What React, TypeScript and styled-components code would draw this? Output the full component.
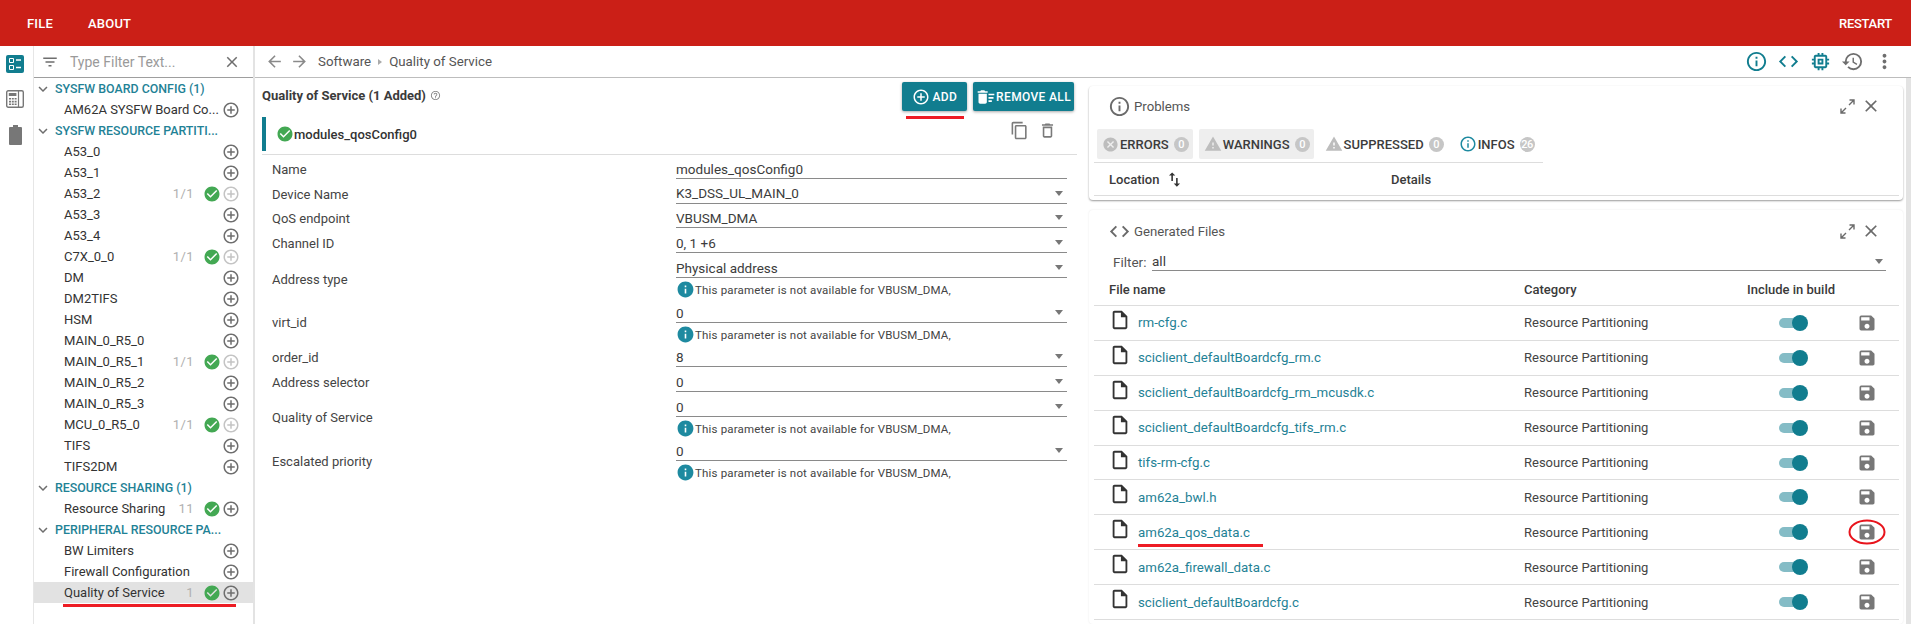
import React from "react";
import styled, { createGlobalStyle } from "styled-components";
import {
  MdAddCircleOutline,
  MdArrowBack,
  MdArrowForward,
  MdCancel,
  MdCheckCircle,
  MdClose,
  MdCode,
  MdContentCopy,
  MdDeleteSweep,
  MdExpandMore,
  MdFilterList,
  MdHistory,
  MdInfo,
  MdInfoOutline,
  MdMemory,
  MdMoreVert,
  MdOutlineDelete,
  MdOutlineInsertDriveFile,
  MdHelpOutline,
  MdSave,
  MdSwapVert,
  MdWarning,
} from "react-icons/md";

const TEAL = "#117d8f";
const GREY = "#6e6e6e";

const GlobalStyle = createGlobalStyle`
  html, body { margin: 0; padding: 0; background: #fff; }
  body { font-family: Roboto, "Liberation Sans", sans-serif; font-size: 13px; color: #333; overflow: hidden; }
  * { box-sizing: border-box; }
`;

const Page = styled.div`
  display: flex;
  flex-direction: column;
  height: 624px;
  overflow: hidden;
`;

const TopBar = styled.header`
  flex: 0 0 46px;
  display: flex;
  align-items: center;
  background: #cb1f17;
  color: #fff;
  font-size: 13px;
  font-weight: 500;
  letter-spacing: 0.2px;
  padding: 0 19px 0 27px;
  gap: 35px;
`;

const TopSpacer = styled.div`
  flex: 1;
`;

const RestartLabel = styled.span`
  letter-spacing: -0.3px;
`;

const Rail = styled.nav`
  flex: 0 0 34px;
  display: flex;
  flex-direction: column;
  align-items: center;
  padding: 9px 3px 0 0;
  border-right: 1px solid #e6e6e6;
  gap: 17px;
`;

const Body = styled.div`
  flex: 1;
  display: flex;
  min-height: 0;
`;

const Sidebar = styled.aside`
  flex: 0 0 221px;
  border-right: 2px solid #e3e3e3;
  display: flex;
  flex-direction: column;
`;

const FilterBar = styled.div`
  flex: 0 0 32px;
  display: flex;
  align-items: center;
  border-bottom: 1px solid #9e9e9e;
  padding: 0 12px 0 7px;
  color: #9a9a9a;
  font-size: 14px;
  svg { color: ${GREY}; }
`;

const FilterText = styled.span`
  flex: 1;
  padding-left: 11px;
`;

const TreeHeader = styled.div`
  height: 21px;
  display: flex;
  align-items: center;
  gap: 3px;
  color: #1f8296;
  font-size: 12.4px;
  font-weight: 500;
  white-space: nowrap;
  svg { color: ${GREY}; flex: none; }
`;

const TreeRow = styled.div<{ $active?: boolean }>`
  position: relative;
  height: 21px;
  display: flex;
  align-items: center;
  padding-left: 30px;
  padding-right: 13px;
  font-size: 13px;
  color: #333;
  background: ${(p) => (p.$active ? "#e2e2e2" : "transparent")};
`;

const TreeLabel = styled.span`
  flex: 1;
  white-space: nowrap;
`;

const TreeCount = styled.span`
  color: #b0b0b0;
  margin-right: 9px;
  letter-spacing: 0.4px;
`;

const Plus = styled(MdAddCircleOutline)<{ $off?: boolean }>`
  color: ${(p) => (p.$off ? "#c4c4c4" : GREY)};
  margin-left: 1px;
  margin-top: 1px;
`;

const RedLine = styled.span<{ $left: number; $width: number; $bottom: number }>`
  position: absolute;
  left: ${(p) => p.$left}px;
  width: ${(p) => p.$width}px;
  bottom: ${(p) => p.$bottom}px;
  height: 3px;
  background: #ed1c24;
`;

const Main = styled.main`
  flex: 1;
  min-width: 0;
  display: flex;
  flex-direction: column;
`;

const ToolBar = styled.div`
  flex: 0 0 32px;
  display: flex;
  align-items: center;
  border-bottom: 1px solid #bdbdbd;
  padding: 0 15px 0 10px;
  color: #555;
  font-size: 13.3px;
`;

const Crumbs = styled.div`
  flex: 1;
  display: flex;
  align-items: center;
  gap: 7px;
  padding-left: 9px;
`;

const CrumbArrow = styled.span`
  width: 0;
  height: 0;
  border-left: 4px solid #aaa;
  border-top: 3.5px solid transparent;
  border-bottom: 3.5px solid transparent;
`;

const ToolIcons = styled.div`
  display: flex;
  align-items: center;
  gap: 9px;
`;

const NavIcon = styled.span<{ $teal?: boolean }>`
  display: flex;
  color: ${(p) => (p.$teal ? TEAL : GREY)};
`;

const NavArrows = styled.div`
  display: flex;
  gap: 6px;
  color: #8a8a8a;
`;

const Content = styled.div`
  flex: 1;
  min-height: 0;
  display: flex;
`;

const LeftPanel = styled.section`
  flex: 0 0 829px;
  padding: 4px 7px 0 7px;
`;

const PanelHead = styled.div`
  height: 30px;
  display: flex;
  align-items: flex-start;
  justify-content: space-between;
  padding-right: 3px;
`;

const PanelTitle = styled.div`
  display: flex;
  align-items: center;
  gap: 4px;
  height: 26px;
  font-size: 13px;
  font-weight: 700;
  color: #3b3b3b;
  svg { color: #888; }
`;

const HeadButtons = styled.div`
  display: flex;
  gap: 6px;
`;

const ActionButton = styled.div`
  position: relative;
  height: 29px;
  display: flex;
  align-items: center;
  padding: 0 3px;
  background: ${TEAL};
  border-radius: 2px;
  color: #fff;
  font-size: 12px;
  font-weight: 500;
  letter-spacing: 0.35px;
  box-shadow: 0 1px 3px rgba(0, 0, 0, 0.35);
`;

const AddButton = styled(ActionButton)`
  padding: 0 10px;
  gap: 2px;
`;

const ConfigHead = styled.div`
  height: 38px;
  margin-top: 5px;
  padding-bottom: 3px;
  border-bottom: 1px solid #ddd;
  display: flex;
  align-items: stretch;
`;

const ConfigTitle = styled.div`
  flex: 1;
  display: flex;
  align-items: center;
  border-left: 4px solid ${TEAL};
  padding-left: 10px;
  font-size: 13px;
  font-weight: 500;
  color: #333;
  svg { color: #43a853; }
`;

const ConfigTools = styled.div`
  display: flex;
  align-items: center;
  gap: 9px;
  padding: 0 20px 8px 0;
  color: #7a7a7a;
`;

const Form = styled.div`
  padding: 0 10px;
`;

const FieldRow = styled.div<{ $h: number }>`
  display: grid;
  grid-template-columns: 404px 391px;
  min-height: ${(p) => p.$h}px;
`;

const FieldLabel = styled.div<{ $top: number; $bottom: number }>`
  display: flex;
  align-items: center;
  padding: ${(p) => p.$top}px 0 ${(p) => p.$bottom}px;
  color: #444;
`;

const FieldBox = styled.div`
  display: flex;
  flex-direction: column;
  justify-content: flex-end;
`;

const Select = styled.div`
  height: 20px;
  display: flex;
  align-items: center;
  justify-content: space-between;
  padding-right: 4px;
  border-bottom: 1px solid #8a8a8a;
  font-size: 13.5px;
  color: #3c3c3c;
`;

const Caret = styled.span`
  width: 0;
  height: 0;
  border-left: 4.5px solid transparent;
  border-right: 4.5px solid transparent;
  border-top: 5px solid #777;
`;

const Hint = styled.div`
  height: 24px;
  display: flex;
  align-items: center;
  padding-bottom: 1px;
  font-size: 11.5px;
  letter-spacing: 0.17px;
  color: #444;
  white-space: nowrap;
  svg { color: #1e8aa0; flex: none; }
`;

const RightColumn = styled.section`
  flex: 1;
  min-width: 0;
  padding: 8px 3px 0 5px;
  display: flex;
  flex-direction: column;
  gap: 10px;
`;

const Card = styled.div`
  background: #fff;
  border-radius: 4px;
  box-shadow: 0 1px 2px rgba(0, 0, 0, 0.4);
  padding: 0 4px 4px 5px;
`;

const OpenCard = styled(Card)`
  flex: 1;
  box-shadow: 0 0 2px rgba(0, 0, 0, 0.1);
`;

const CardHead = styled.div<{ $h: number }>`
  height: ${(p) => p.$h}px;
  display: flex;
  align-items: center;
  padding: 0 18px 0 14px;
  color: #555;
  font-size: 13.2px;
  gap: 3px;
  svg { color: #6a6a6a; flex: none; }
`;

const CardTitle = styled.span`
  flex: 1;
`;

const CardClose = styled(MdClose)`
  margin-left: 3px;
`;

const TabRow = styled.div`
  height: 37px;
  display: flex;
  align-items: flex-start;
  gap: 6px;
  padding: 3px 0 0 3px;
  border-bottom: 1px solid #ddd;
  margin-right: 356px;
`;

const Tab = styled.div<{ $on?: boolean }>`
  height: 30px;
  display: flex;
  align-items: center;
  padding: 0 4px 0 5px;
  gap: 1px;
  background: ${(p) => (p.$on ? "#eeeeee" : "transparent")};
  border-radius: 2px;
  font-size: 13px;
  font-weight: 500;
  color: #3c3c3c;
`;

const Badge = styled.span`
  min-width: 15px;
  height: 15px;
  margin-left: 4px;
  border-radius: 50%;
  background: #c6c6c6;
  color: #fff;
  font-size: 11px;
  display: flex;
  align-items: center;
  justify-content: center;
  letter-spacing: -0.5px;
`;

const GridHead = styled.div`
  display: grid;
  grid-template-columns: 282px 1fr;
  height: 33px;
  align-items: center;
  padding: 0 15px;
  font-weight: 500;
  color: #3a3a3a;
  border-bottom: 1px solid #ddd;
`;

const SortCell = styled.span`
  display: flex;
  align-items: center;
  gap: 6px;
  svg { color: #333; }
`;

const FilterRow = styled.div`
  height: 19px;
  display: flex;
  align-items: center;
  padding: 0 13px 0 19px;
  color: #555;
  font-size: 13.5px;
`;

const FilterLabel = styled.span`
  flex: 0 0 39px;
`;

const FilterSelect = styled(Select)`
  flex: 1;
  height: 19px;
  padding-right: 3px;
`;

const FileGrid = styled.div`
  display: grid;
  grid-template-columns: 415px 223px 109.5px 1fr;
  align-items: center;
`;

const FileHead = styled(FileGrid)`
  height: 35px;
  padding: 2px 0 0 15px;
  font-weight: 500;
  color: #3a3a3a;
  border-bottom: 1px solid #ddd;
  white-space: nowrap;
`;

const FileRow = styled(FileGrid)`
  position: relative;
  height: 34.9px;
  padding-left: 15px;
  border-bottom: 1px solid #ddd;
  color: #444;
`;

const FileName = styled.span`
  display: flex;
  align-items: center;
  gap: 7px;
  color: #1f8296;
  font-size: 13.3px;
  svg { color: #333; margin-top: -6px; }
`;

const Toggle = styled.span`
  position: relative;
  justify-self: start;
  width: 27px;
  height: 10px;
  margin-left: 32px;
  border-radius: 5px;
  background: #84bcc6;
  &::after {
    content: "";
    position: absolute;
    right: -2px;
    top: -3px;
    width: 16px;
    height: 16px;
    border-radius: 50%;
    background: ${TEAL};
  }
`;

const SaveCell = styled.span`
  position: relative;
  display: flex;
  width: 20px;
  color: #777;
`;

const Circled = styled.svg`
  position: absolute;
  left: -10px;
  top: -4px;
  overflow: visible;
`;

const PageScroll = styled.div`
  flex: 0 0 5px;
  background: #e3e3e3;
`;

const IconBox = styled.svg`
  display: block;
`;

type TreeItem = { name: string; count?: string; off?: boolean };

const resourceItems: TreeItem[] = [
  { name: "A53_0" },
  { name: "A53_1" },
  { name: "A53_2", count: "1/1", off: true },
  { name: "A53_3" },
  { name: "A53_4" },
  { name: "C7X_0_0", count: "1/1", off: true },
  { name: "DM" },
  { name: "DM2TIFS" },
  { name: "HSM" },
  { name: "MAIN_0_R5_0" },
  { name: "MAIN_0_R5_1", count: "1/1", off: true },
  { name: "MAIN_0_R5_2" },
  { name: "MAIN_0_R5_3" },
  { name: "MCU_0_R5_0", count: "1/1", off: true },
  { name: "TIFS" },
  { name: "TIFS2DM" },
];

const files = [
  "rm-cfg.c",
  "sciclient_defaultBoardcfg_rm.c",
  "sciclient_defaultBoardcfg_rm_mcusdk.c",
  "sciclient_defaultBoardcfg_tifs_rm.c",
  "tifs-rm-cfg.c",
  "am62a_bwl.h",
  "am62a_qos_data.c",
  "am62a_firewall_data.c",
  "sciclient_defaultBoardcfg.c",
];

const hint = "This parameter is not available for VBUSM_DMA,";

const fields = [
  { label: "Name", value: "modules_qosConfig0", h: 24, top: 4, bottom: 0, plain: true },
  { label: "Device Name", value: "K3_DSS_UL_MAIN_0", h: 24.5, top: 6, bottom: 0 },
  { label: "QoS endpoint", value: "VBUSM_DMA", h: 24.5, top: 6, bottom: 0 },
  { label: "Channel ID", value: "0, 1 +6", h: 25, top: 6, bottom: 0 },
  { label: "Address type", value: "Physical address", h: 49, top: 4, bottom: 0, hint: true },
  { label: "virt_id", value: "0", h: 45, top: 0, bottom: 5, hint: true },
  { label: "order_id", value: "8", h: 20, top: 0, bottom: 0 },
  { label: "Address selector", value: "0", h: 25, top: 6, bottom: 0 },
  { label: "Quality of Service", value: "0", h: 49, top: 2, bottom: 0, hint: true },
  { label: "Escalated priority", value: "0", h: 44, top: 0, bottom: 4, hint: true },
];

const Check = () => <MdCheckCircle size={18} color="#43a853" />;

const Tree = ({ items }: { items: TreeItem[] }) => (
  <>
    {items.map((it) => (
      <TreeRow key={it.name}>
        <TreeLabel>{it.name}</TreeLabel>
        {it.count && <TreeCount>{it.count}</TreeCount>}
        {it.count && <Check />}
        <Plus size={18} $off={it.off} />
      </TreeRow>
    ))}
  </>
);

const ChecklistIcon = () => (
  <IconBox width="18" height="18" viewBox="0 0 18 18">
    <rect width="18" height="18" rx="2" fill={TEAL} />
    <path d="M3.5 3.5h4v4h-4zM3.5 10.5h4v4h-4z" fill="none" stroke="#fff" />
    <path d="M10 5h5M10 12.5h5" stroke="#fff" strokeWidth="1.6" />
  </IconBox>
);

const CalcIcon = () => (
  <IconBox width="18" height="18" viewBox="0 0 18 18">
    <rect x="0.7" y="0.7" width="16.6" height="16.6" rx="1.5" fill="none" stroke="#777" strokeWidth="1.4" />
    <path d="M12.5 1v16" stroke="#777" strokeWidth="1.2" />
    <rect x="2.8" y="3" width="7.6" height="3" fill="#777" />
    <path
      d="M3 8h2v1.6H3zM5.8 8h2v1.6h-2zM8.6 8h2v1.6h-2zM3 10.8h2v1.6H3zM5.8 10.8h2v1.6h-2zM8.6 10.8h2v1.6h-2zM3 13.5h2v1.6H3zM5.8 13.5h2v1.6h-2zM8.6 13.5h2v1.6h-2z"
      fill="#777"
    />
  </IconBox>
);

const BatteryIcon = () => (
  <IconBox width="13" height="20" viewBox="0 0 13 20">
    <path d="M4 0h5v2h3a1 1 0 0 1 1 1v16a1 1 0 0 1-1 1H1a1 1 0 0 1-1-1V3a1 1 0 0 1 1-1h3z" fill="#777" />
  </IconBox>
);

const ExpandIcon = () => (
  <IconBox width="15" height="15" viewBox="0 0 15 15">
    <path d="M9.5 1h4.5v4.5M14 1L9 6M5.5 14H1V9.5M1 14l5-5" fill="none" stroke="#6a6a6a" strokeWidth="1.4" />
  </IconBox>
);

const App = () => (
  <Page>
    <GlobalStyle />
    <TopBar>
      <span>FILE</span>
      <span>ABOUT</span>
      <TopSpacer />
      <RestartLabel>RESTART</RestartLabel>
    </TopBar>
    <Body>
      <Rail>
        <ChecklistIcon />
        <CalcIcon />
        <BatteryIcon />
      </Rail>
      <Sidebar>
        <FilterBar>
          <MdFilterList size={18} />
          <FilterText>Type Filter Text...</FilterText>
          <MdClose size={18} />
        </FilterBar>
        <TreeHeader>
          <MdExpandMore size={18} />
          SYSFW BOARD CONFIG (1)
        </TreeHeader>
        <Tree items={[{ name: "AM62A SYSFW Board Co..." }]} />
        <TreeHeader>
          <MdExpandMore size={18} />
          SYSFW RESOURCE PARTITI...
        </TreeHeader>
        <Tree items={resourceItems} />
        <TreeHeader>
          <MdExpandMore size={18} />
          RESOURCE SHARING (1)
        </TreeHeader>
        <TreeRow>
          <TreeLabel>Resource Sharing</TreeLabel>
          <TreeCount>11</TreeCount>
          <Check />
          <Plus size={18} />
        </TreeRow>
        <TreeHeader>
          <MdExpandMore size={18} />
          PERIPHERAL RESOURCE PA...
        </TreeHeader>
        <Tree items={[{ name: "BW Limiters" }, { name: "Firewall Configuration" }]} />
        <TreeRow $active>
          <TreeLabel>Quality of Service</TreeLabel>
          <TreeCount>1</TreeCount>
          <Check />
          <Plus size={18} />
          <RedLine $left={29} $width={173} $bottom={-4} />
        </TreeRow>
      </Sidebar>
      <Main>
        <ToolBar>
          <NavArrows>
            <MdArrowBack size={19} />
            <MdArrowForward size={19} />
          </NavArrows>
          <Crumbs>
            <span>Software</span>
            <CrumbArrow />
            <span>Quality of Service</span>
          </Crumbs>
          <ToolIcons>
            <NavIcon $teal>
              <MdInfoOutline size={23} />
            </NavIcon>
            <NavIcon $teal>
              <MdCode size={23} />
            </NavIcon>
            <NavIcon $teal>
              <MdMemory size={23} />
            </NavIcon>
            <NavIcon>
              <MdHistory size={23} />
            </NavIcon>
            <NavIcon>
              <MdMoreVert size={23} />
            </NavIcon>
          </ToolIcons>
        </ToolBar>
        <Content>
          <LeftPanel>
            <PanelHead>
              <PanelTitle>
                Quality of Service (1 Added)
                <MdHelpOutline size={11} />
              </PanelTitle>
              <HeadButtons>
                <AddButton>
                  <MdAddCircleOutline size={18} />
                  ADD
                  <RedLine $left={4} $width={58} $bottom={-8} />
                </AddButton>
                <ActionButton>
                  <MdDeleteSweep size={20} />
                  REMOVE ALL
                </ActionButton>
              </HeadButtons>
            </PanelHead>
            <ConfigHead>
              <ConfigTitle>
                <MdCheckCircle size={18} />
                modules_qosConfig0
              </ConfigTitle>
              <ConfigTools>
                <MdContentCopy size={19} />
                <MdOutlineDelete size={19} />
              </ConfigTools>
            </ConfigHead>
            <Form>
              {fields.map((f) => (
                <FieldRow key={f.label} $h={f.h}>
                  <FieldLabel $top={f.top} $bottom={f.bottom}>
                    {f.label}
                  </FieldLabel>
                  <FieldBox>
                    <Select>
                      {f.value}
                      {!f.plain && <Caret />}
                    </Select>
                    {f.hint && (
                      <Hint>
                        <MdInfo size={19} />
                        {hint}
                      </Hint>
                    )}
                  </FieldBox>
                </FieldRow>
              ))}
            </Form>
          </LeftPanel>
          <RightColumn>
            <Card>
              <CardHead $h={40}>
                <MdInfoOutline size={23} />
                <CardTitle>Problems</CardTitle>
                <ExpandIcon />
                <CardClose size={20} />
              </CardHead>
              <TabRow>
                <Tab $on>
                  <MdCancel size={17} color="#bdbdbd" />
                  ERRORS
                  <Badge>0</Badge>
                </Tab>
                <Tab $on>
                  <MdWarning size={18} color="#bdbdbd" />
                  WARNINGS
                  <Badge>0</Badge>
                </Tab>
                <Tab>
                  <MdWarning size={18} color="#bdbdbd" />
                  SUPPRESSED
                  <Badge>0</Badge>
                </Tab>
                <Tab>
                  <MdInfoOutline size={18} color="#1e8aa0" />
                  INFOS
                  <Badge>26</Badge>
                </Tab>
              </TabRow>
              <GridHead>
                <SortCell>
                  Location
                  <MdSwapVert size={19} />
                </SortCell>
                <span>Details</span>
              </GridHead>
            </Card>
            <OpenCard>
              <CardHead $h={42}>
                <MdCode size={23} />
                <CardTitle>Generated Files</CardTitle>
                <ExpandIcon />
                <CardClose size={20} />
              </CardHead>
              <FilterRow>
                <FilterLabel>Filter:</FilterLabel>
                <FilterSelect>
                  all
                  <Caret />
                </FilterSelect>
              </FilterRow>
              <FileHead>
                <span>File name</span>
                <span>Category</span>
                <span>Include in build</span>
              </FileHead>
              {files.map((name) => (
                <FileRow key={name}>
                  <FileName>
                    <MdOutlineInsertDriveFile size={22} />
                    {name}
                  </FileName>
                  <span>Resource Partitioning</span>
                  <Toggle />
                  <SaveCell>
                    <MdSave size={20} />
                    {name === "am62a_qos_data.c" && (
                      <Circled width="40" height="28" viewBox="0 0 40 28">
                        <ellipse cx="20" cy="14" rx="17.5" ry="11.5" fill="none" stroke="#e8141c" strokeWidth="2" />
                      </Circled>
                    )}
                  </SaveCell>
                  {name === "am62a_qos_data.c" && <RedLine $left={44} $width={125} $bottom={2} />}
                </FileRow>
              ))}
            </OpenCard>
          </RightColumn>
          <PageScroll />
        </Content>
      </Main>
    </Body>
  </Page>
);

export default App;
